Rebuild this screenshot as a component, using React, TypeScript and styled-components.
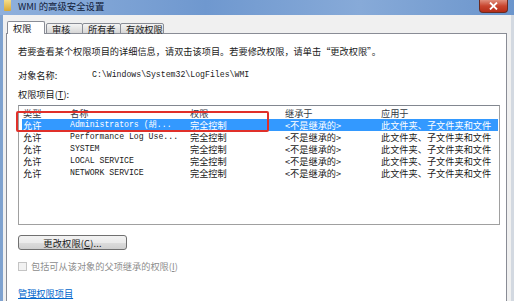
import React from 'react';
import styled, { createGlobalStyle } from 'styled-components';

const GlobalStyle = createGlobalStyle`
  * {
    margin: 0;
    padding: 0;
    box-sizing: border-box;
  }
  html, body {
    width: 514px;
    height: 301px;
    overflow: hidden;
    background: #ffffff;
    font-family: "Noto Sans CJK SC", "Noto Sans", sans-serif;
  }
`;

const Window = styled.div`
  width: 514px;
  height: 301px;
  display: flex;
  flex-direction: column;
  background: #7fa2cf;
`;

const TitleBar = styled.div`
  height: 15px;
  display: flex;
  align-items: center;
  padding-left: 4px;
  background: linear-gradient(to right, #8fb0dc 0%, #6f98cf 40%, #87aad8 70%, #6b95cc 100%);
  position: relative;
`;

const FolderIcon = styled.div`
  width: 7px;
  height: 11px;
  margin-top: -4px;
  background: linear-gradient(to bottom, #f5dd8a, #d9a935);
  border-radius: 0 0 1px 1px;
`;

const Title = styled.span`
  margin-left: 7px;
  font-size: 9.4px;
  line-height: 11px;
  margin-top: -3px;
  color: #10203a;
`;

const CloseButton = styled.div`
  position: absolute;
  right: 6px;
  top: 0;
  width: 29px;
  height: 13px;
  border: 1px solid #6b2a20;
  border-top: none;
  border-radius: 0 0 4px 4px;
  background: linear-gradient(to bottom, #e08f7d, #c8452f 50%, #b42d18);
  display: flex;
  align-items: center;
  justify-content: center;
`;

const Frame = styled.div`
  flex: 1;
  display: flex;
  border-left: 3px solid #7fa2cf;
  border-right: 3px solid #d3d9e1;
  background: #f0f0f0;
`;

const Client = styled.div`
  flex: 1;
  display: flex;
  flex-direction: column;
  background: #f0f0f0;
  padding: 6px 4px 0 3px;
`;

const TabStrip = styled.div`
  display: flex;
  align-items: flex-end;
  height: 13px;
  padding-left: 1px;
  position: relative;
  z-index: 1;
`;

const Tab = styled.div<{ $active?: boolean; $w: number }>`
  width: ${p => p.$w}px;
  height: ${p => (p.$active ? 13 : 11)}px;
  margin-right: ${p => (p.$active ? 1 : -1)}px;
  border: 1px solid #898c95;
  border-bottom: ${p => (p.$active ? 'none' : '1px solid #898c95')};
  border-radius: 2px 2px 0 0;
  background: ${p => (p.$active ? '#ffffff' : 'linear-gradient(to bottom, #f4f4f4, #e2e2e2 60%, #d6d6d6)')};
  font-size: 9.2px;
  line-height: ${p => (p.$active ? 12 : 10)}px;
  color: #1a1a1a;
  padding-left: 5px;
`;

const Panel = styled.div`
  flex: 1;
  margin-top: -1px;
  background: #ffffff;
  border: 1px solid #898c95;
  border-bottom: none;
  padding: 11px 0 0 11px;
  display: flex;
  flex-direction: column;
  align-items: flex-start;
  font-size: 9.2px;
  color: #1a1a1a;
`;

const Text = styled.div<{ $mt?: number }>`
  line-height: 12px;
  margin-top: ${p => p.$mt ?? 0}px;
  white-space: nowrap;
`;

const FieldRow = styled.div`
  display: flex;
  align-items: center;
  margin-top: 12px;
  line-height: 12px;
  white-space: nowrap;
`;

const FieldLabel = styled.span`
  width: 74px;
`;

const Mono = styled.span`
  font-family: "Liberation Mono", "Noto Sans CJK SC", monospace;
  font-size: 8.2px;
`;

const ListBox = styled.div`
  position: relative;
  margin-top: 5px;
  width: 482px;
  height: 120px;
  border: 1px solid #a0a0a0;
  border-top-color: #828790;
  padding-top: 1px;
  background: #ffffff;
`;

const Row = styled.div<{ $selected?: boolean; $header?: boolean }>`
  display: grid;
  grid-template-columns: 47px 120px 95px 96px 1fr;
  height: 12px;
  line-height: 12px;
  margin: 0 1px 0 3px;
  padding-left: 1px;
  background: ${p => (p.$selected ? '#3399ff' : 'transparent')};
  color: ${p => (p.$selected ? '#ffffff' : p.$header ? '#333a44' : '#1a1a1a')};
  white-space: nowrap;
  overflow: hidden;
`;

const Cell = styled.span<{ $mono?: boolean }>`
  display: block;
  height: 12px;
  font-family: ${p => (p.$mono ? '"Liberation Mono", "Noto Sans CJK SC", monospace' : '"Noto Sans CJK SC", sans-serif')};
  font-size: ${p => (p.$mono ? 8.2 : 9.2)}px;
  overflow: hidden;
`;

const Annotation = styled.div`
  position: absolute;
  left: -3px;
  top: 5px;
  width: 253px;
  height: 21px;
  border: 2px solid #e0302a;
  border-radius: 2px;
  pointer-events: none;
`;

const Button = styled.div`
  margin-top: 10px;
  width: 109px;
  height: 15px;
  border: 1px solid #707070;
  border-radius: 3px;
  background: linear-gradient(to bottom, #f2f2f2 0%, #ebebeb 50%, #dddddd 51%, #cfcfcf 100%);
  display: flex;
  align-items: center;
  justify-content: center;
  font-size: 9.2px;
  line-height: 12px;
  letter-spacing: 0.2px;
`;

const CheckRow = styled.div`
  margin-top: 10px;
  display: flex;
  align-items: center;
  gap: 4px;
  height: 12px;
  color: #8d8d8d;
  white-space: nowrap;
`;

const CheckBox = styled.div`
  width: 9px;
  height: 9px;
  border: 1px solid #c4c4c4;
  background: #f2f2f2;
`;

const Link = styled.div`
  margin-top: 15px;
  color: #0066cc;
  text-decoration: underline;
  line-height: 12px;
`;

const tabs = [
  { label: '权限', w: 38, active: true },
  { label: '审核', w: 37 },
  { label: '所有者', w: 39 },
  { label: '有效权限', w: 44 },
];

const entries = [
  { type: '允许', name: 'Administrators (胡...', perm: '完全控制' },
  { type: '允许', name: 'Performance Log Use...', perm: '完全控制' },
  { type: '允许', name: 'SYSTEM', perm: '完全控制' },
  { type: '允许', name: 'LOCAL SERVICE', perm: '完全控制' },
  { type: '允许', name: 'NETWORK SERVICE', perm: '完全控制' },
];

export default function App() {
  return (
    <>
      <GlobalStyle />
      <Window>
        <TitleBar>
          <FolderIcon />
          <Title>WMI 的高级安全设置</Title>
          <CloseButton>
            <svg width="9" height="8" viewBox="0 0 9 8">
              <path d="M1 0.5 L8 7.5 M8 0.5 L1 7.5" stroke="#ffffff" strokeWidth="1.8" />
            </svg>
          </CloseButton>
        </TitleBar>
        <Frame>
          <Client>
            <TabStrip>
              {tabs.map(t => (
                <Tab key={t.label} $active={t.active} $w={t.w}>{t.label}</Tab>
              ))}
            </TabStrip>
            <Panel>
              <Text>若要查看某个权限项目的详细信息，请双击该项目。若要修改权限，请单击“更改权限”。</Text>
              <FieldRow>
                <FieldLabel>对象名称:</FieldLabel>
                <Mono>C:\Windows\System32\LogFiles\WMI</Mono>
              </FieldRow>
              <Text $mt={7}>权限项目(<u>T</u>):</Text>
              <ListBox>
                <Row $header>
                  <Cell>类型</Cell>
                  <Cell>名称</Cell>
                  <Cell>权限</Cell>
                  <Cell>继承于</Cell>
                  <Cell>应用于</Cell>
                </Row>
                {entries.map((e, i) => (
                  <Row key={e.name} $selected={i === 0}>
                    <Cell>{e.type}</Cell>
                    <Cell $mono>{e.name}</Cell>
                    <Cell>{e.perm}</Cell>
                    <Cell>&lt;不是继承的&gt;</Cell>
                    <Cell>此文件夹、子文件夹和文件</Cell>
                  </Row>
                ))}
                <Annotation />
              </ListBox>
              <Button>更改权限(<u>C</u>)...</Button>
              <CheckRow>
                <CheckBox />
                <span>包括可从该对象的父项继承的权限(<u>I</u>)</span>
              </CheckRow>
              <Link>管理权限项目</Link>
            </Panel>
          </Client>
        </Frame>
      </Window>
    </>
  );
}
